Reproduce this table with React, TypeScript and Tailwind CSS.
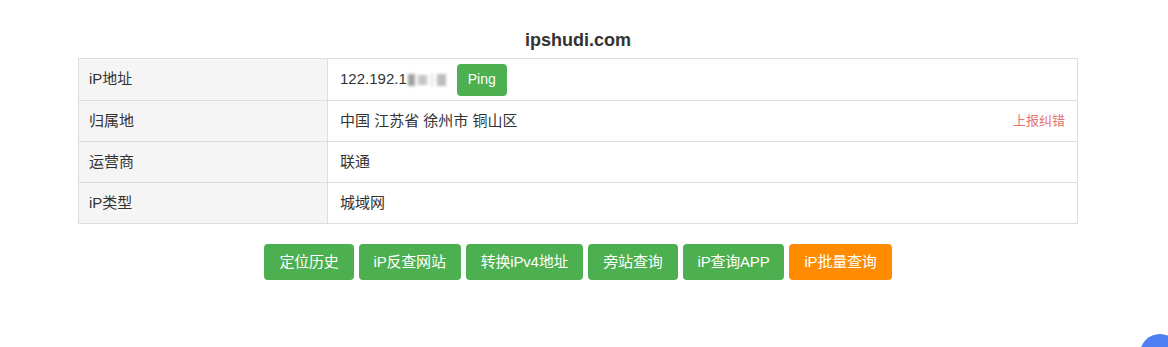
const rows = [
  { label: "iP地址", kind: "ip" },
  { label: "归属地", kind: "loc" },
  { label: "运营商", value: "联通" },
  { label: "iP类型", value: "城域网" },
];

const actions = [
  { text: "定位历史" },
  { text: "iP反查网站" },
  { text: "转换iPv4地址" },
  { text: "旁站查询" },
  { text: "iP查询APP" },
  { text: "iP批量查询", orange: true },
];

function MaskedIp() {
  return (
    <span className="inline-flex items-center">
      122.192.1
      <span className="ml-px inline-flex h-[16px] w-[38px] items-center gap-[3px] blur-[1.5px]">
        <span className="h-[12px] w-[7px] bg-[#a0a0a0]" />
        <span className="h-[10px] w-[9px] bg-[#c4c4c4]" />
        <span className="h-[12px] w-[4px] bg-[#ececec]" />
        <span className="h-[12px] w-[9px] bg-[#bcbcbc]" />
      </span>
    </span>
  );
}

export default function App() {
  return (
    <div
      className="relative h-[347px] w-[1168px] overflow-hidden bg-white text-[#333]"
      style={{ fontFamily: '"Liberation Sans", Arial, "Noto Sans CJK SC", sans-serif' }}
    >
      <div className="w-[1156px]">
        <h1 className="pt-[29px] text-center text-[18px] font-bold leading-[22px] text-[#333]">
          ipshudi.com
        </h1>

        <table className="mx-auto mt-[7px] w-[1000px] border-collapse text-[15px]">
          <tbody>
            {rows.map((r, i) => (
              <tr key={r.label} className={i === 0 ? "h-[42px]" : "h-[41px]"}>
                <td className="w-[249px] border border-[#dddddd] bg-[#f5f5f5] px-[10px] align-middle">
                  {r.label}
                </td>
                <td className="border border-[#dddddd] px-[12px] align-middle">
                  {r.kind === "ip" && (
                    <div className="flex items-center">
                      <MaskedIp />
                      <button className="ml-[11px] h-[32px] w-[50px] rounded-[4px] bg-[#4caf50] text-[14px] text-white">
                        Ping
                      </button>
                    </div>
                  )}
                  {r.kind === "loc" && (
                    <div className="flex items-center justify-between">
                      <span>中国 江苏省 徐州市 铜山区</span>
                      <span className="text-[13px] text-[#e57373]">上报纠错</span>
                    </div>
                  )}
                  {r.value && <span>{r.value}</span>}
                </td>
              </tr>
            ))}
          </tbody>
        </table>

        <div className="mt-[20px] flex justify-center gap-[5px]">
          {actions.map((a) => (
            <button
              key={a.text}
              className={`h-[36px] rounded-[4px] px-[15px] text-[15px] tracking-[-0.2px] text-white ${
                a.orange ? "bg-[#ff8c00]" : "bg-[#4caf50]"
              }`}
            >
              {a.text}
            </button>
          ))}
        </div>
      </div>

      <div className="absolute left-[1140px] top-[334px] h-[40px] w-[40px] rounded-full bg-[#4f7ff0]" />
    </div>
  );
}
